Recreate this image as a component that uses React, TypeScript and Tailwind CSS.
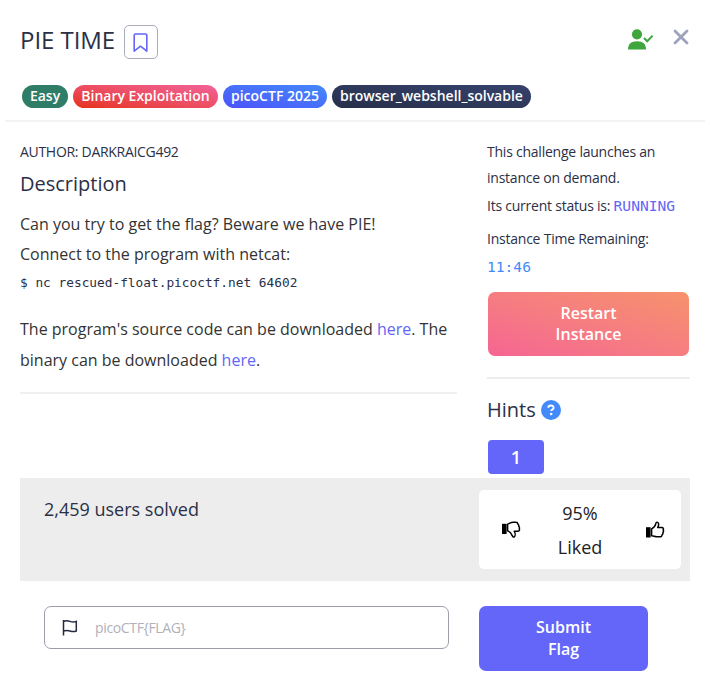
import React from "react";

const Badge = ({ className, children }: { className: string; children: React.ReactNode }) => (
  <span className={`flex h-[23px] items-center justify-center whitespace-nowrap rounded-full pb-[2px] text-[14px] font-semibold text-white ${className}`}>
    {children}
  </span>
);

const BookmarkIcon = () => (
  <svg className="mt-px -ml-px" width="15" height="20" viewBox="0 0 15 20" fill="none" stroke="#6366f9" strokeWidth="1.6" strokeLinejoin="round">
    <path d="M1.2 2.2Q1.2 1 2.4 1h10.2q1.2 0 1.2 1.2v16l-6.3-5-6.3 5Z" />
  </svg>
);

const SolvedIcon = () => (
  <svg width="26" height="21" viewBox="0 0 26 21" fill="#3ea63d">
    <circle cx="9" cy="5.3" r="5.1" />
    <path d="M0 20.5C0 15 3 12.2 9 12.2s9 2.8 9 8.3Z" />
    <path d="M16 9l3.2 3.2L24.6 6.6" fill="none" stroke="#3ea63d" strokeWidth="2" />
  </svg>
);

const CloseIcon = () => (
  <svg width="16" height="16" viewBox="0 0 16 16" stroke="#9da2bd" strokeWidth="2.8" strokeLinecap="round">
    <path d="M2 2l12 12M14 2L2 14" />
  </svg>
);

const ThumbUp = () => (
  <svg width="19" height="18" viewBox="0 0 19 18" fill="none" stroke="#000" strokeWidth="1.5" strokeLinejoin="round">
    <path d="M0 6.2h4.6v10.3H0Z" fill="#000" stroke="none" />
    <path d="M5.6 7.9C7.7 7 9.3 4.9 9.8 2.7c.3-1.2 1-1.6 1.8-1.3 1.6.7 1.2 3.3.1 5.1h4c1.7 0 2.1 1.3 1.4 2.4.6.8.4 1.9-.2 2.6.3 1-.1 1.900-.9 2.300.1 1.400-.9 2-2.300 2h-2.900c-2 0-3.100-1-5.200-1Z" />
  </svg>
);

const ThumbDown = () => (
  <svg width="19" height="18" viewBox="0 0 19 18" fill="none" stroke="#000" strokeWidth="1.5" strokeLinejoin="round">
    <path d="M0 2.8h4.6v10.2H0Z" fill="#000" stroke="none" />
    <path d="M5.6 3.2C8 2.2 9 1.3 11.2 1.3h2.4c1.3 0 2.2.6 2.3 1.8.8.5 1 1.400.8 2.200.7.7.9 1.700.6 2.500.5 1.300-.2 2.500-1.600 2.500h-3.400c1 1.800 1.200 4.600 0 5.500-1 .6-1.700-.1-2.100-1.200C9.300 12.400 8.200 10.700 5.600 9.900Z" />
  </svg>
);

const FlagIcon = () => (
  <svg width="16" height="17" viewBox="0 0 16 17" fill="none" stroke="#252a42" strokeWidth="1.5">
    <path d="M1.5 1v15.5M1.5 2.5C4 1.2 6 1.7 8 2.4s4 1 6.3 0V12c-2.3 1-4.300.7-6.300 0s-4-.8-6.500 0" />
  </svg>
);

export default function App() {
  return (
    <div className="h-[699px] w-[713px] overflow-hidden bg-white font-['Open_Sans','Noto_Sans',sans-serif] text-[#2b3047]">
      <header className="ml-[5px] h-[122px] w-[700px] border-b-2 border-[#f3f3f3] px-[15px] pt-[25px]">
        <div className="flex h-[35px] items-start">
          <h1 className="w-[104px] whitespace-nowrap text-[24px] leading-[30px] tracking-[-0.05px]">PIE TIME</h1>
          <button className="flex h-[34px] w-[34px] items-center justify-center rounded-[5px] border border-[#a9adb8]">
            <BookmarkIcon />
          </button>
          <div className="ml-auto mr-[1px] flex items-start gap-[19px] pt-[4px]">
            <SolvedIcon />
            <CloseIcon />
          </div>
        </div>
        <div className="ml-[2px] mt-[25px] flex gap-[5px]">
          <Badge className="w-[46px] bg-[#307d67]">Easy</Badge>
          <Badge className="w-[145px] bg-linear-to-tr from-[#e6300b] to-[#f2629a]">Binary Exploitation</Badge>
          <Badge className="w-[104px] bg-linear-to-tr from-[#4c50fa] to-[#4389fb]">picoCTF 2025</Badge>
          <Badge className="w-[199px] bg-linear-to-tr from-[#273049] to-[#37426e]">browser_webshell_solvable</Badge>
        </div>
      </header>

      <main className="flex h-[356px] gap-[30px] pl-[20px]">
        <section className="h-[272px] w-[437px] border-b-2 border-[#f0f0f0] pt-[20px]">
          <div className="h-[20px] text-[14px] leading-[20px] tracking-[-0.3px]"><span>AUTHOR: DARKRAICG492</span></div>
          <h2 className="mt-[8px] text-[20px] leading-[28px]"><span>Description</span></h2>
          <div className="mt-[11px] text-[16px] leading-[30px] text-[#333]">
            <p>Can you try to get the flag? Beware we have PIE!</p>
            <p>Connect to the program with netcat:</p>
          </div>
          <code className="block h-[26px] whitespace-nowrap font-['DejaVu_Sans_Mono',monospace] text-[12.8px] leading-[28px]"><span>$ nc rescued-float.picoctf.net 64602</span></code>
          <p className="mt-[19px] whitespace-nowrap text-[16px] leading-[31px] text-[#333]">
            The program's source code can be downloaded <a className="text-[#6266f5]">here</a>. The
            <br />
            binary can be downloaded <a className="text-[#6266f5]">here</a>.
          </p>
        </section>

        <aside className="w-[203px]">
          <div className="whitespace-nowrap pt-[17px] text-[14px] leading-[26px] tracking-[-0.23px]">
            <p>This challenge launches an</p>
            <p>instance on demand.</p>
            <p className="mt-[2px] h-[26px]">
              Its current status is: <span className="font-['DejaVu_Sans_Mono',monospace] text-[14.6px] leading-none tracking-normal text-[#6366f5]">RUNNING</span>
            </p>
            <p className="mt-[7px]">Instance Time Remaining:</p>
            <p className="mt-[2px] h-[26px] font-['DejaVu_Sans_Mono',monospace] text-[14.6px] leading-[25px] tracking-normal text-[#438bf8]">11:46</p>
          </div>
          <button className="ml-[1px] mt-[12px] block h-[64px] w-[201px] rounded-[7px] bg-linear-to-tr from-[#f56592] to-[#f6926b] text-[16px] font-semibold leading-[21px] text-white">
            Restart
            <br />
            Instance
          </button>
          <hr className="mt-[21px] border-t-2 border-[#ececec]" />
          <div className="mt-[16px] flex h-[30px] items-center">
            <h2 className="w-[54px] text-[20px]">Hints</h2>
            <svg width="20" height="20" viewBox="0 0 20 20" fill="none">
              <circle cx="10" cy="10" r="10" fill="#438bfa" />
              <path d="M7.3 7.8c0-3 5.3-3 5.3-.1 0 1.9-2.4 1.7-2.4 3.4" stroke="#fff" strokeWidth="1.9" />
              <circle cx="10.2" cy="14" r="1.3" fill="#fff" />
            </svg>
          </div>
          <button className="ml-[1px] mt-[15px] block h-[34px] w-[56px] rounded-[4px] bg-[#6366f9] text-[18px] font-semibold leading-[34px] text-white">1</button>
        </aside>
      </main>

      <section className="ml-[20px] flex h-[103px] w-[670px] justify-between bg-[#ededed] pl-[24px] pr-[9px] pt-[12px]">
        <p className="mt-[5px] text-[18px] leading-[28px]">2,459 users solved</p>
        <div className="flex h-[79px] w-[202px] items-center justify-between rounded-[5px] bg-white pl-[23px] pr-[16px]">
          <ThumbDown />
          <p className="mr-[7px] text-center text-[18px] leading-[34px] text-[#222]">
            95%
            <br />
            Liked
          </p>
          <ThumbUp />
        </div>
      </section>

      <form className="ml-[44px] mt-[25px] flex items-start gap-[30px]">
        <label className="flex h-[43px] w-[405px] items-center rounded-[7px] border border-[#9d9ea9] pl-[17px]">
          <FlagIcon />
          <span className="ml-[17px] text-[14px] tracking-[-0.35px] text-[#b0b1b9]">picoCTF&#123;FLAG&#125;</span>
        </label>
        <button type="button" className="h-[65px] w-[169px] rounded-[7px] bg-[#6366f9] pb-[2px] text-[16px] font-semibold leading-[22px] text-white">
          Submit
          <br />
          Flag
        </button>
      </form>
    </div>
  );
}
